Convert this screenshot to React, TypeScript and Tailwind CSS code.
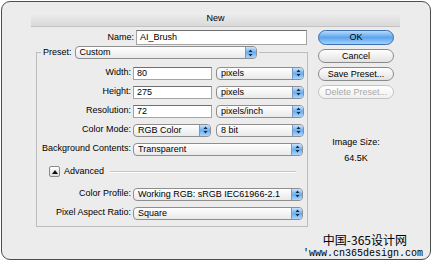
import React from 'react'

const font = "font-['Liberation_Sans',Arial,sans-serif]"

function Arrows() {
  return (
    <svg width="5" height="8" viewBox="0 0 5 8">
      <path d="M2.5 0.5 L4.5 3 L0.5 3 Z" fill="#1a2a40" />
      <path d="M2.5 7.5 L4.5 5 L0.5 5 Z" fill="#1a2a40" />
    </svg>
  )
}

function Popup({ label, width }: { label: string; width: string }) {
  return (
    <div
      className={`${width} shrink-0 h-[13px] flex items-stretch rounded-[4px] border border-[#8e8e8e] bg-linear-to-b from-white to-[#e9e9e9] overflow-hidden`}
    >
      <span className="flex-1 pl-[4px] leading-[11px] truncate">{label}</span>
      <span className="w-[11px] flex items-center justify-center border-l border-[#7a98c0] bg-linear-to-b from-[#c8e4fb] via-[#6aaef0] to-[#a9d6fb]">
        <Arrows />
      </span>
    </div>
  )
}

function TextInput({ value, width }: { value: string; width: string }) {
  return (
    <div
      className={`${width} shrink-0 h-[13px] bg-white border border-[#a4a4a4] border-t-[#6f6f6f] pl-[3px] leading-[11px]`}
    >
      {value}
    </div>
  )
}

function Row({ label, children }: { label: string; children: React.ReactNode }) {
  return (
    <div className="flex items-center h-[13px] gap-[2px]">
      <span className="w-[94px] text-right">{label}</span>
      {children}
    </div>
  )
}

function Button({ label, primary, disabled }: { label: string; primary?: boolean; disabled?: boolean }) {
  const skin = primary
    ? 'h-[15px] border-[#3f6fae] bg-linear-to-b from-[#b5dbfb] via-[#5ba4ee] to-[#9fd2fb] text-black'
    : disabled
      ? 'h-[14px] border-[#c4c4c4] bg-linear-to-b from-white to-[#f0f0f0] text-[#a8a8a8]'
      : 'h-[14px] border-[#8a8a8a] bg-linear-to-b from-white to-[#e2e2e2] text-black'
  return (
    <div className={`rounded-full border flex items-center justify-center leading-none ${skin}`}>
      {label}
    </div>
  )
}

export default function App() {
  return (
    <div className={`w-[432px] h-[261px] bg-white p-[1px] relative text-[9px] text-black ${font}`}>
      <div className="h-[259px] rounded-[9px] border border-[#4d4d4d] bg-[#ececec] flex flex-col">
        {/* title bar */}
        <div className="ml-[29px] mt-[10px] w-[369px] h-[15px] flex items-center justify-center bg-linear-to-b from-[#efefef] to-[#d9d9d9] border-b border-[#c2c2c2]">
          New
        </div>

        <div className="flex">
          {/* left column */}
          <div className="ml-[34px] w-[272px] flex flex-col">
            <div className="mt-[3px] flex items-center h-[15px] gap-[2px]">
              <span className="w-[98px] text-right">Name:</span>
              <div className="w-[171px] h-[15px] bg-white border border-[#a4a4a4] border-t-[#6f6f6f] pl-[3px] leading-[13px]">
                AI_Brush
              </div>
            </div>

            <fieldset className="mt-[1px] border border-[#bcbcbc] pt-[7px] pb-[6px] flex flex-col">
              <legend className="ml-[4px] px-[2px]">
                <div className="flex items-center gap-[3px]">
                  <span className="shrink-0">Preset:</span>
                  <Popup label="Custom" width="w-[182px]" />
                </div>
              </legend>

              <div className="flex flex-col gap-[6px]">
                <Row label="Width:">
                  <TextInput value="80" width="w-[79px]" />
                  <div className="ml-[2px]">
                    <Popup label="pixels" width="w-[88px]" />
                  </div>
                </Row>
                <Row label="Height:">
                  <TextInput value="275" width="w-[79px]" />
                  <div className="ml-[2px]">
                    <Popup label="pixels" width="w-[88px]" />
                  </div>
                </Row>
                <Row label="Resolution:">
                  <TextInput value="72" width="w-[79px]" />
                  <div className="ml-[2px]">
                    <Popup label="pixels/inch" width="w-[88px]" />
                  </div>
                </Row>
                <Row label="Color Mode:">
                  <Popup label="RGB Color" width="w-[78px]" />
                  <div className="ml-[3px]">
                    <Popup label="8 bit" width="w-[88px]" />
                  </div>
                </Row>
                <Row label="Background Contents:">
                  <Popup label="Transparent" width="w-[170px]" />
                </Row>
              </div>

              {/* advanced */}
              <div className="mt-[10px] h-[12px] flex items-center pl-[12px] pr-[11px]">
                <div className="w-[11px] h-[11px] rounded-[2px] border border-[#8a8a8a] bg-linear-to-b from-white to-[#dcdcdc] flex items-center justify-center">
                  <svg width="6" height="4" viewBox="0 0 6 4">
                    <path d="M3 0 L6 4 L0 4 Z" fill="#111" />
                  </svg>
                </div>
                <span className="ml-[4px]">Advanced</span>
                <div className="flex-1 ml-[6px] h-[2px] border-t border-[#c6c6c6] border-b border-b-white" />
              </div>

              <div className="mt-[10px] flex flex-col gap-[6px]">
                <Row label="Color Profile:">
                  <Popup label="Working RGB:  sRGB IEC61966-2.1" width="w-[170px]" />
                </Row>
                <Row label="Pixel Aspect Ratio:">
                  <Popup label="Square" width="w-[170px]" />
                </Row>
              </div>
            </fieldset>
          </div>

          {/* right column */}
          <div className="ml-[10px] w-[76px] flex flex-col">
            <div className="mt-[3px] flex flex-col gap-[4px]">
              <Button label="OK" primary />
              <Button label="Cancel" />
              <Button label="Save Preset..." />
              <Button label="Delete Preset..." disabled />
            </div>
            <div className="mt-[38px] text-center leading-[11px]">Image Size:</div>
            <div className="mt-[5px] text-center leading-[11px]">64.5K</div>
          </div>
        </div>
      </div>

      {/* watermark */}
      <div className="absolute right-[9px] bottom-[2px] flex flex-col items-end gap-[3px]">
        <span className="mr-[16px] text-[12px] leading-[12px] font-['Noto_Sans_CJK_SC',sans-serif]">中国-365设计网</span>
        <span className="text-[10px] leading-[10px] font-['Liberation_Mono',monospace]">'www.cn365design.com</span>
      </div>
    </div>
  )
}
